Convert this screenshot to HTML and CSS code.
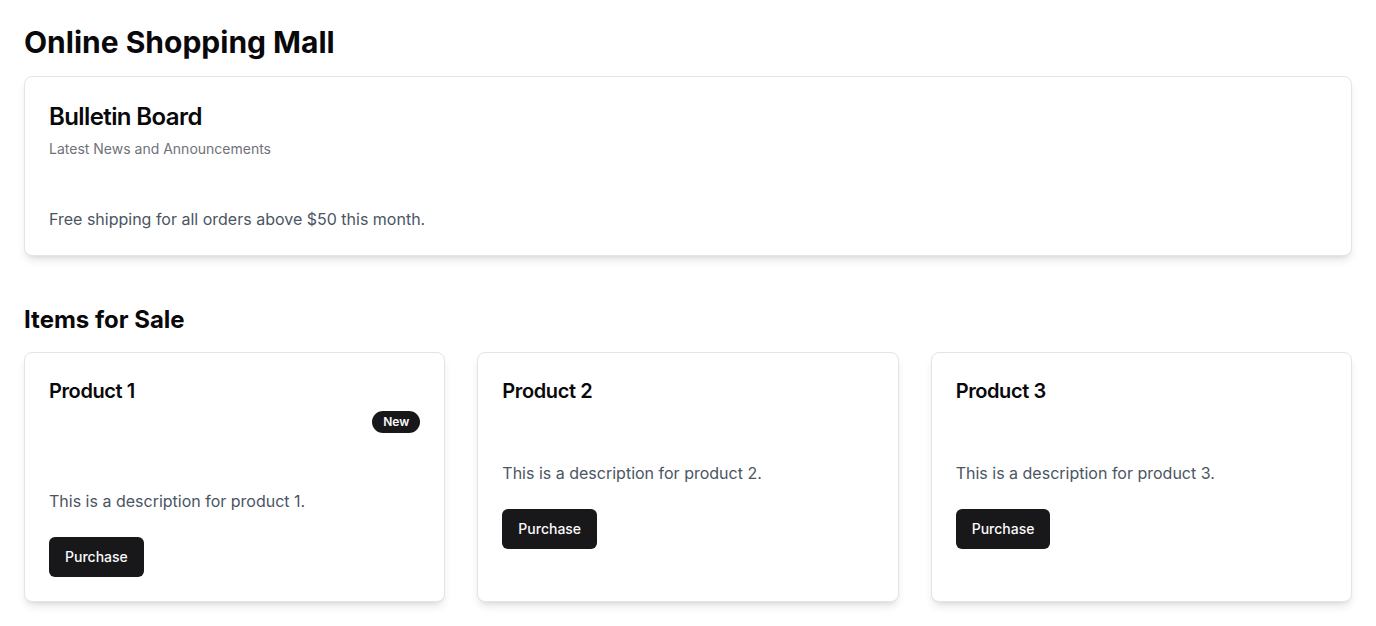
FILE: index.html
```html
<!DOCTYPE html>
<html lang="en">
<head>
<meta charset="utf-8">
<title>Online Shopping Mall</title>
<link rel="stylesheet" href="styles.css">
</head>
<body>
<main class="page">
  <h1 class="page-title">Online Shopping Mall</h1>

  <section class="card bulletin">
    <div class="card-header">
      <h2 class="card-title">Bulletin Board</h2>
      <p class="card-desc">Latest News and Announcements</p>
    </div>
    <div class="card-content">
      <p class="notice">Free shipping for all orders above $50 this month.</p>
    </div>
  </section>

  <h2 class="section-title">Items for Sale</h2>

  <div class="grid">
    <article class="card product">
      <div class="card-header">
        <h3 class="product-title">Product 1</h3>
        <span class="badge">New</span>
      </div>
      <div class="product-content">
        <p class="notice">This is a description for product 1.</p>
      </div>
      <div class="card-footer">
        <button class="btn">Purchase</button>
      </div>
    </article>
    <article class="card product">
      <div class="card-header">
        <h3 class="product-title">Product 2</h3>
      </div>
      <div class="product-content">
        <p class="notice">This is a description for product 2.</p>
      </div>
      <div class="card-footer">
        <button class="btn">Purchase</button>
      </div>
    </article>
    <article class="card product">
      <div class="card-header">
        <h3 class="product-title">Product 3</h3>
      </div>
      <div class="product-content">
        <p class="notice">This is a description for product 3.</p>
      </div>
      <div class="card-footer">
        <button class="btn">Purchase</button>
      </div>
    </article>
  </div>
</main>
</body>
</html>
```

FILE: styles.css
```css
* { box-sizing: border-box; }
html, body { margin: 0; padding: 0; background: #ffffff; }
body {
  font-family: Inter, "Noto Sans", sans-serif;
  color: #09090b;
  -webkit-font-smoothing: antialiased;
}
h1, h2, h3, p { margin: 0; }

.page {
  padding: 24px;
}

.page-title {
  font-size: 30px;
  line-height: 36px;
  font-weight: 700;
  margin-bottom: 16px;
}

.card {
  background: #ffffff;
  border: 1px solid #e4e4e7;
  border-radius: 8px;
  box-shadow: 0 6px 10px -2px rgba(0,0,0,0.1), 0 3px 5px -3px rgba(0,0,0,0.1);
}

.card-header {
  display: flex;
  flex-direction: column;
  gap: 6px;
  padding: 24px;
}

.card-title {
  font-size: 24px;
  line-height: 32px;
  font-weight: 600;
  letter-spacing: -0.6px;
}

.card-desc {
  font-size: 14px;
  line-height: 20px;
  color: #71717a;
}

.card-content {
  padding: 24px;
}

.notice {
  font-size: 16px;
  line-height: 24px;
  color: #4b5563;
}

.section-title {
  font-size: 24px;
  line-height: 32px;
  font-weight: 700;
  margin-top: 48px;
  margin-bottom: 16px;
}

.grid {
  display: grid;
  grid-template-columns: repeat(3, 1fr);
  gap: 32px;
}

.product {
  display: flex;
  flex-direction: column;
}

.product-title {
  font-size: 20px;
  line-height: 28px;
  font-weight: 600;
  letter-spacing: -0.4px;
}

.badge {
  align-self: flex-end;
  display: inline-flex;
  align-items: center;
  background: #18181b;
  color: #fafafa;
  border: 1px solid transparent;
  border-radius: 9999px;
  padding: 2px 10px;
  font-size: 12px;
  line-height: 16px;
  font-weight: 600;
}

.product-content {
  padding: 32px 24px 24px;
}

.card-footer {
  padding: 0 24px 24px;
  display: flex;
}

.btn {
  font-family: inherit;
  height: 40px;
  padding: 0 16px;
  border: none;
  border-radius: 6px;
  background: #18181b;
  color: #fafafa;
  font-size: 14px;
  font-weight: 500;
  line-height: 20px;
  cursor: pointer;
}
```
